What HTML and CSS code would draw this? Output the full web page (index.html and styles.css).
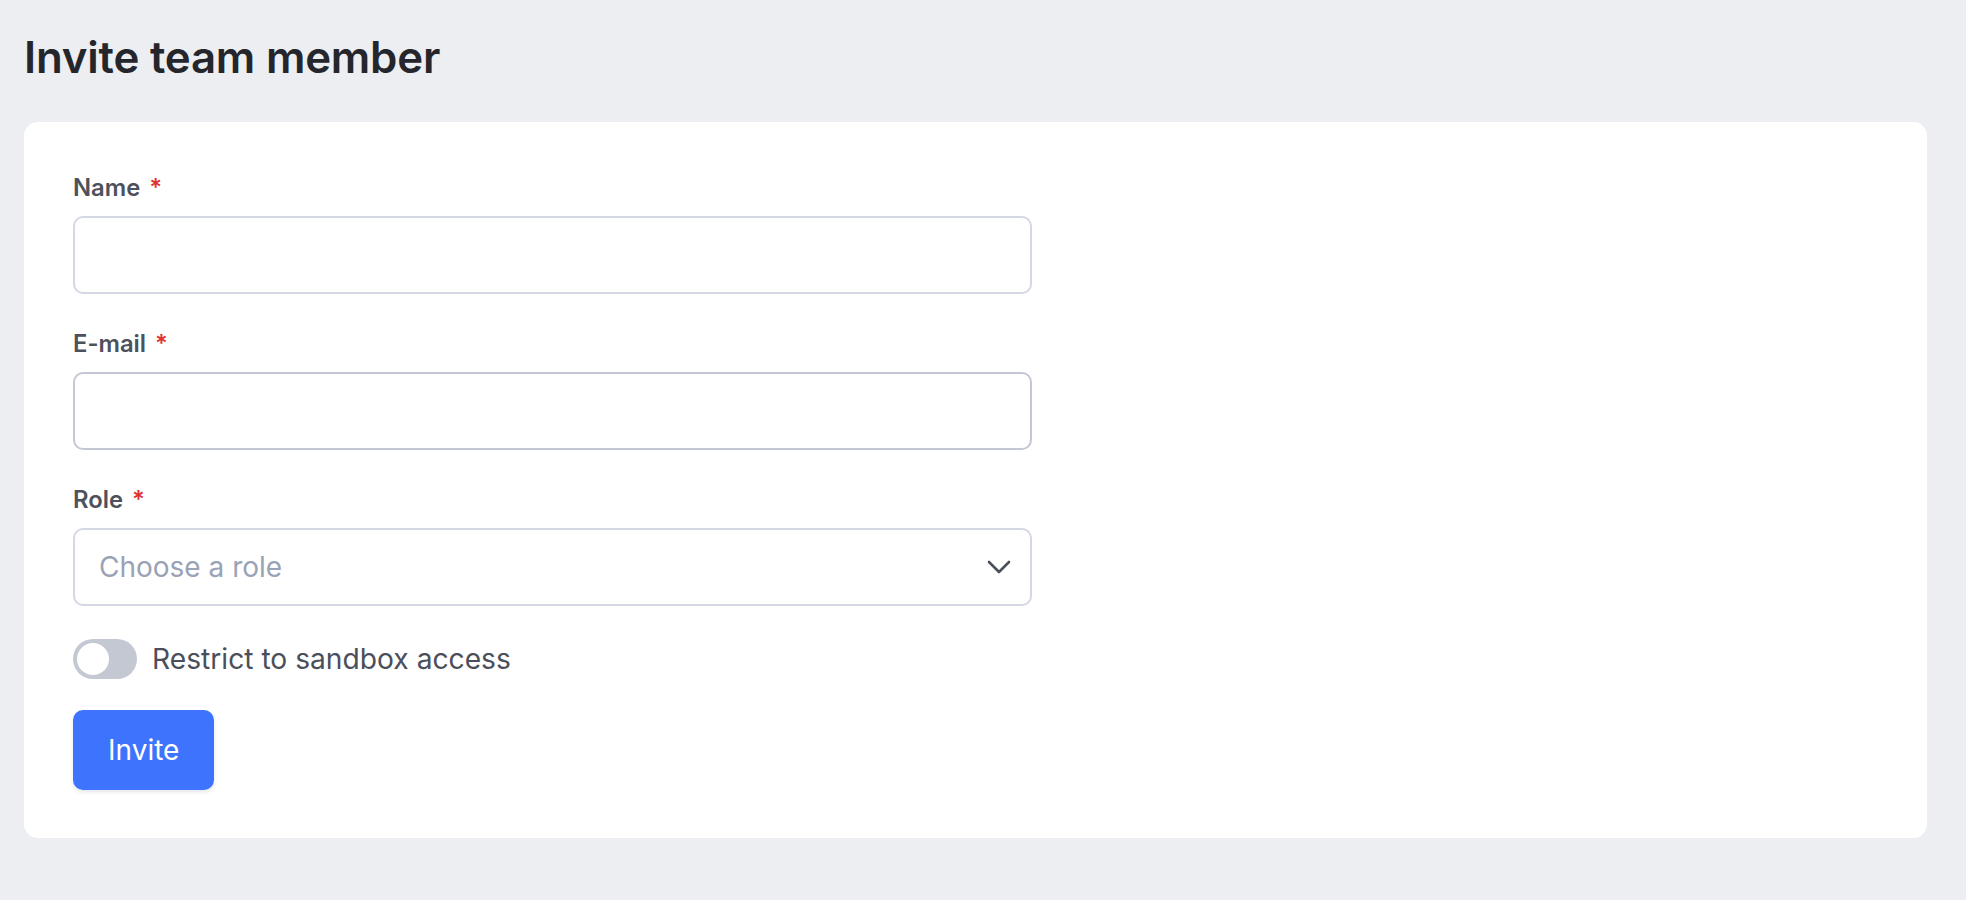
FILE: index.html
```html
<!DOCTYPE html>
<html lang="en">
<head>
<meta charset="utf-8">
<title>Invite team member</title>
<link rel="stylesheet" href="styles.css">
</head>
<body>
<main class="page">
  <h1 class="title">Invite team member</h1>
  <form class="card">
    <div class="field">
      <label class="label" for="name">Name <span class="req">*</span></label>
      <input class="input" id="name" type="text">
    </div>
    <div class="field">
      <label class="label" for="email">E-mail <span class="req">*</span></label>
      <input class="input input-hover" id="email" type="email">
    </div>
    <div class="field">
      <label class="label" for="role">Role <span class="req">*</span></label>
      <div class="select-wrap">
        <select class="input select" id="role">
          <option value="" selected>Choose a role</option>
        </select>
        <svg class="chevron" width="24" height="16" viewBox="0 0 24 16" aria-hidden="true">
          <path d="M2 3 L12 13 L22 3" fill="none" stroke="#4a4f5a" stroke-width="2.6" stroke-linecap="round" stroke-linejoin="round"/>
        </svg>
      </div>
    </div>
    <label class="switch">
      <input class="switch-input" type="checkbox">
      <span class="track"><span class="thumb"></span></span>
      <span class="switch-label">Restrict to sandbox access</span>
    </label>
    <div class="actions">
      <button class="btn" type="button">Invite</button>
    </div>
  </form>
</main>
</body>
</html>
```
FILE: styles.css
```css
* { box-sizing: border-box; }
html, body { margin: 0; padding: 0; }
body {
  background: #edeef2;
  font-family: Inter, "Noto Sans", "Liberation Sans", sans-serif;
  color: #25262b;
}
.page {
  padding: 32px 39px 40px 24px;
}
.title {
  margin: 0 0 39px 0;
  font-size: 43.8px;
  font-weight: 600;
  line-height: 51px;
  color: #25262b;
  letter-spacing: -0.2px;
}
.card {
  background: #ffffff;
  border-radius: 14px;
  padding: 52px 49px 48px 49px;
  display: flex;
  flex-direction: column;
}
.field {
  display: flex;
  flex-direction: column;
  width: 959px;
  margin-bottom: 36px;
}
.label {
  font-size: 23.8px;
  font-weight: 600;
  line-height: 28px;
  color: #4d515c;
  margin-bottom: 14px;
}
.req {
  color: #e03131;
  margin-left: 3px;
}
.input {
  height: 78px;
  width: 100%;
  border: 2px solid #d3d8e3;
  border-radius: 10px;
  background: #fff;
  font-family: inherit;
  font-size: 28px;
  padding: 0 24px;
  color: #25262b;
  outline: none;
}
.input-hover { border-color: #c3c8d4; }
.select-wrap { position: relative; }
.select {
  appearance: none;
  -webkit-appearance: none;
  color: #9aa2b6;
  padding-left: 24px;
}
.chevron {
  position: absolute;
  right: 21px;
  top: 31px;
}
.switch {
  display: flex;
  align-items: center;
  gap: 15px;
  margin-top: -3px;
  margin-bottom: 31px;
  cursor: pointer;
}
.switch-input { display: none; }
.track {
  width: 64px;
  height: 40px;
  border-radius: 20px;
  background: #c3c8d3;
  display: flex;
  align-items: center;
  padding: 0 4px;
  flex-shrink: 0;
}
.thumb {
  width: 32px;
  height: 32px;
  border-radius: 50%;
  background: #fff;
}
.switch-label {
  font-size: 28.2px;
  line-height: 34px;
  color: #4b4f5b;
}
.actions { display: flex; }
.btn {
  height: 80px;
  padding: 0 35px;
  border: none;
  border-radius: 10px;
  background: #3d73fd;
  color: #fff;
  font-family: inherit;
  font-size: 28px;
  font-weight: 400;
  box-shadow: 0 2px 4px rgba(30, 40, 80, 0.12);
  cursor: pointer;
}
```
